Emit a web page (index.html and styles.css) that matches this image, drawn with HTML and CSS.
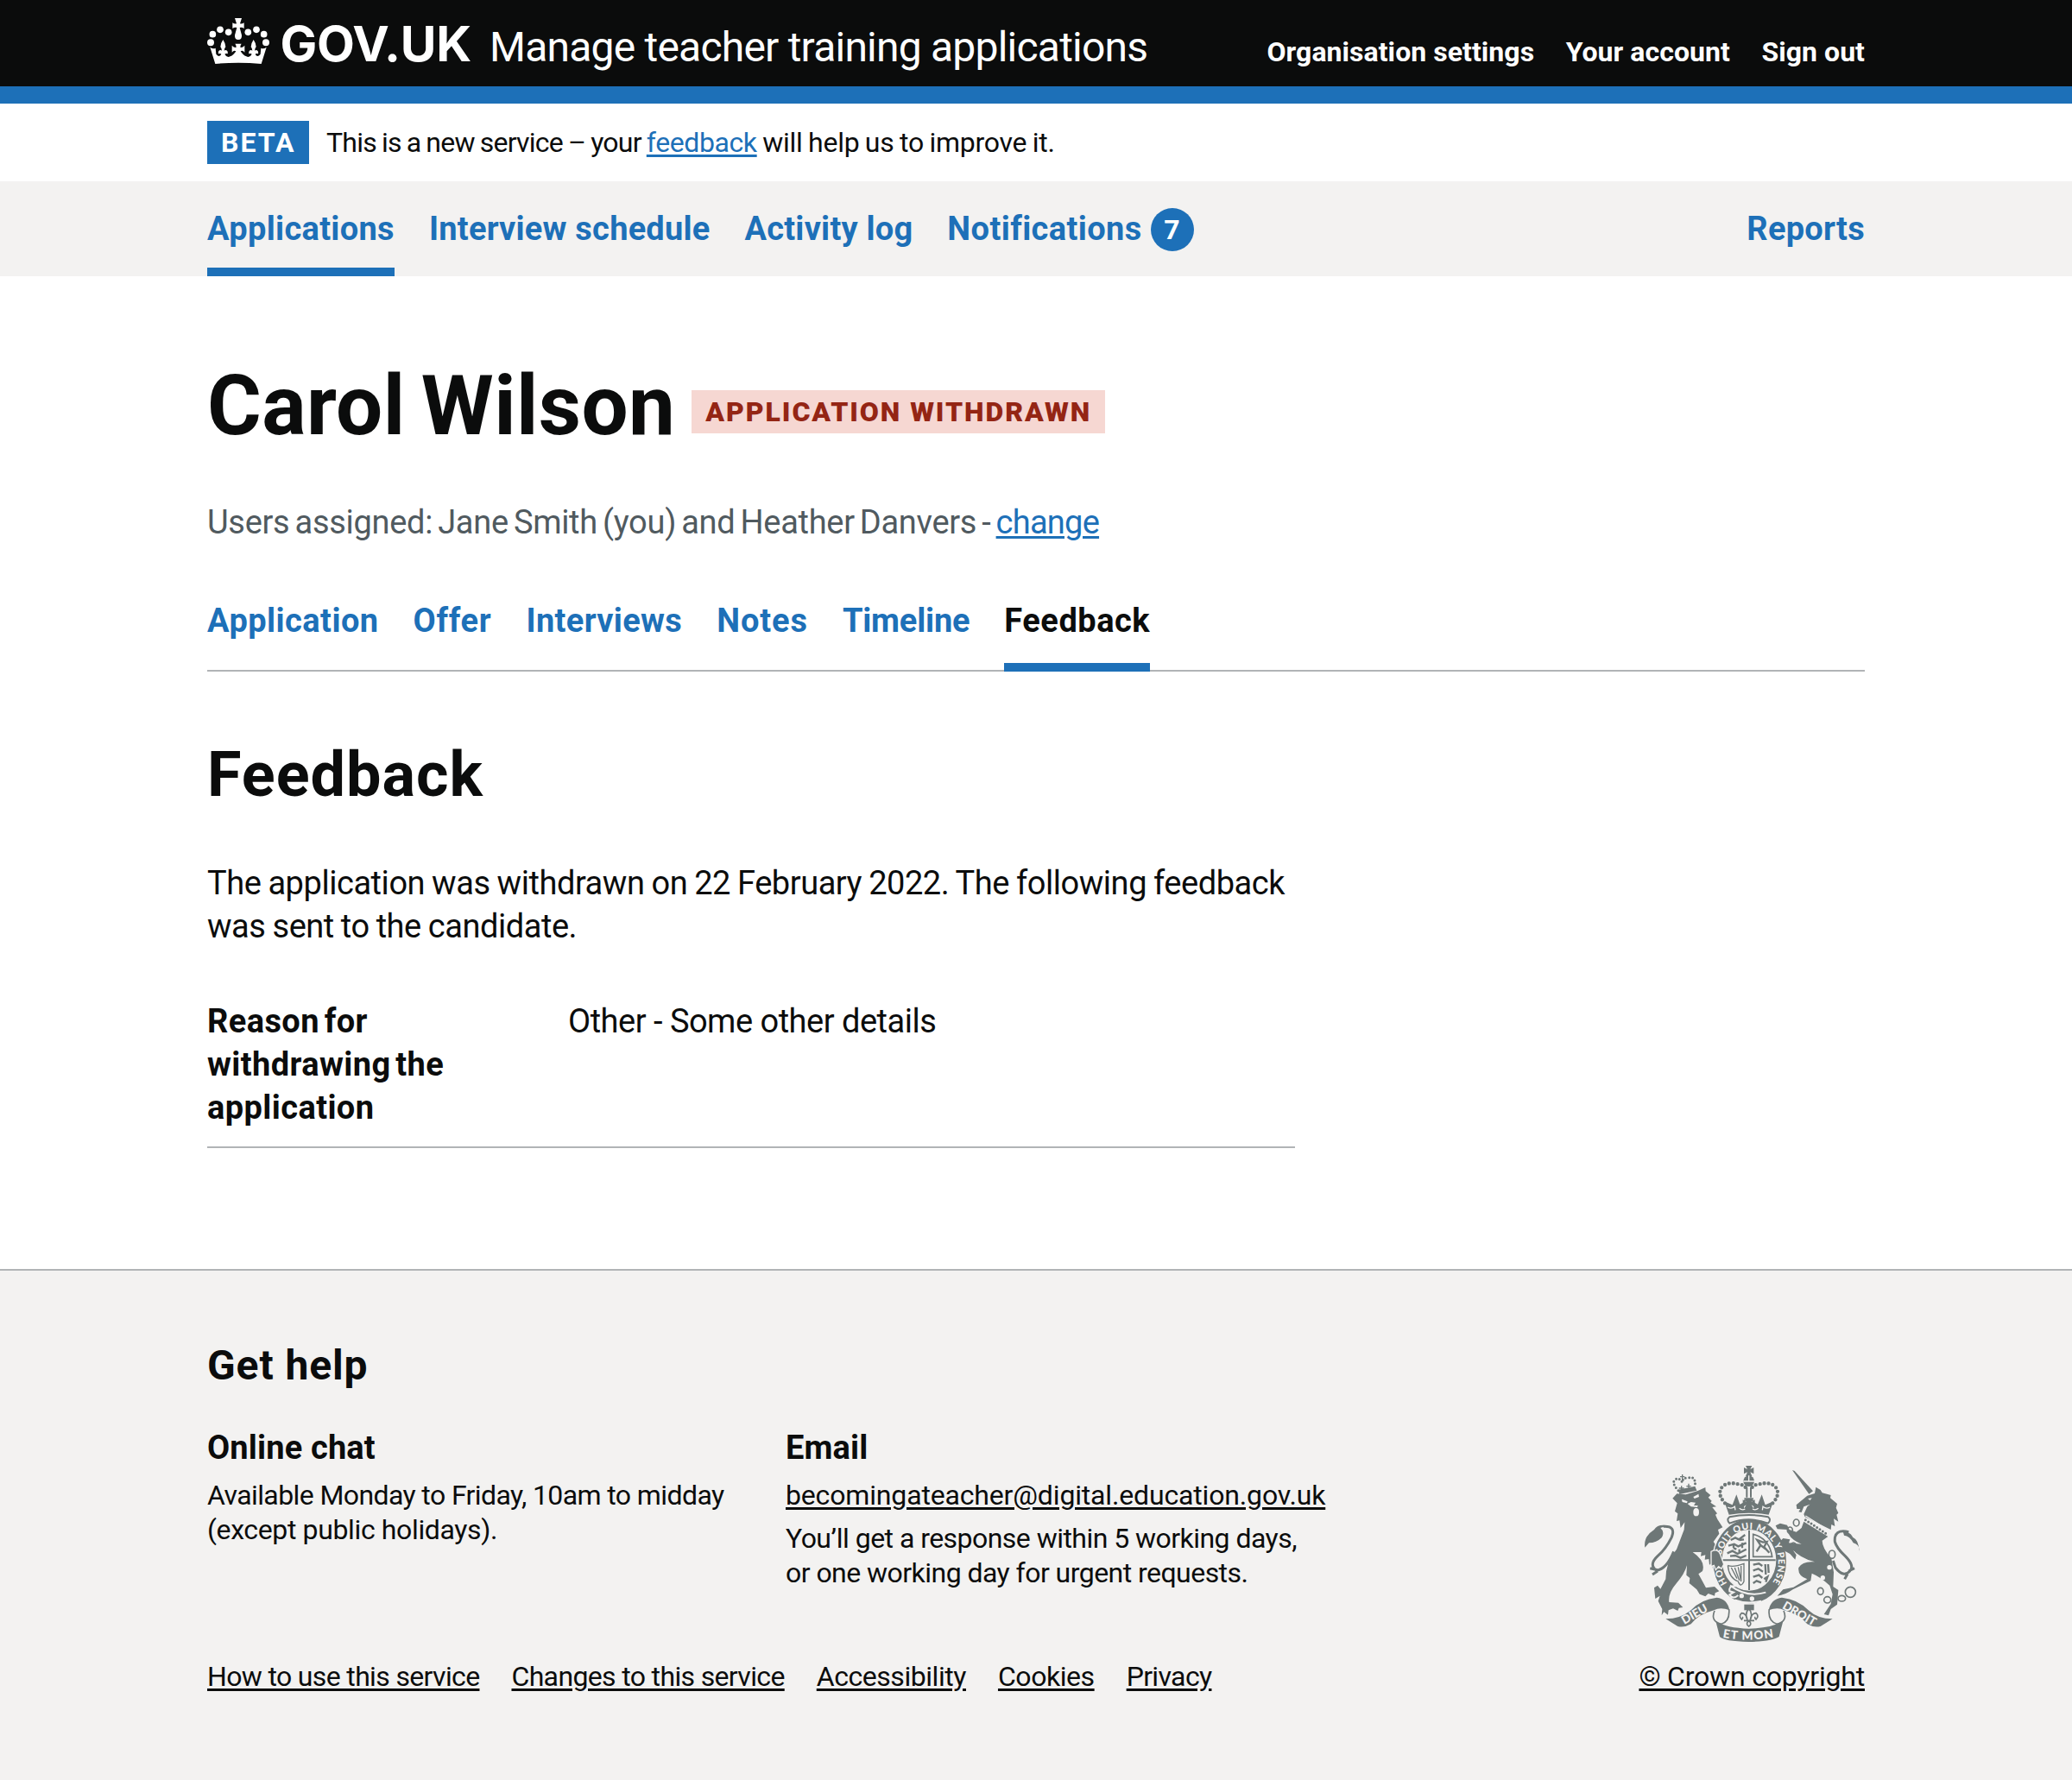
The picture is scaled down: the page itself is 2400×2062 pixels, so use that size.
FILE: index.html
```html
<!DOCTYPE html>
<html lang="en">
<head>
<meta charset="utf-8">
<title>Carol Wilson – Feedback – Manage teacher training applications</title>
<link rel="stylesheet" href="styles.css">
</head>
<body>
<header class="header">
  <div class="container header-row">
    <svg class="crown" viewBox="30 33 216 159" aria-hidden="true">
      <g fill="#fff">
        <circle cx="42" cy="118" r="12"/><circle cx="49" cy="89" r="11.5"/><circle cx="75" cy="73" r="11.5"/><circle cx="104" cy="82" r="11.5"/>
        <circle cx="172" cy="82" r="11.5"/><circle cx="201" cy="73" r="11.5"/><circle cx="227" cy="89" r="11.5"/><circle cx="234" cy="118" r="12"/>
        <path d="M126 33H150L144 52Q151 54 158 49V69Q151 64 143 66L150 92Q151 108 138 108Q125 108 126 92L133 66Q125 64 118 69V49Q125 54 132 52Z"/>
        <path d="M40 134L58 192Q138 184 218 192L236 134Q226 142 217 137L215 158Q204 172 197 158Q200 155 207 157Q209 148 203 145Q199 143 195 146Q196 137 200 133Q199 119 191 108Q183 119 182 133Q186 137 187 146Q183 143 179 145Q173 148 175 157Q182 155 185 158Q178 172 166 166Q154 162 146 148Q153 143 160 152V128Q152 137 145 134Q145 127 149 122H127Q131 127 131 134Q124 137 116 128V152Q123 143 130 148Q122 162 110 166Q98 172 91 158Q94 155 101 157Q103 148 97 145Q93 143 89 146Q90 137 94 133Q93 119 85 108Q77 119 76 133Q80 137 81 146Q77 143 73 145Q67 148 69 157Q76 155 79 158Q72 172 61 158L59 137Q50 142 40 134Z"/>
      </g>
    </svg>
    <a class="logotype">GOV.UK</a>
    <a class="service">Manage teacher training applications</a>
    <nav class="account">
      <a>Organisation settings</a><a>Your account</a><a>Sign out</a>
    </nav>
  </div>
</header>
<div class="container phase">
  <strong class="tag">BETA</strong>
  <p class="phase-text"><span class="phase-a">This is a new service – your </span><a class="link">feedback</a><span class="phase-b"> will help us to improve it.</span></p>
</div>
<nav class="primary">
  <div class="container primary-row">
    <a class="active">Applications</a><a class="sched">Interview schedule</a><a class="log">Activity log</a><a class="notif">Notifications<span class="badge">7</span></a><a class="reports">Reports</a>
  </div>
</nav>
<main class="container main">
  <h1 class="title">Carol Wilson <strong class="tag tag-red">APPLICATION WITHDRAWN</strong></h1>
  <p class="assigned">Users assigned: Jane Smith (you) and Heather Danvers - <a class="link">change</a></p>
  <nav class="tabs">
    <a class="t-app">Application</a><a class="t-offer">Offer</a><a class="t-int">Interviews</a><a class="t-notes">Notes</a><a class="t-time">Timeline</a><a class="t-feed current">Feedback</a>
  </nav>
  <h2 class="heading">Feedback</h2>
  <p class="body">The application was withdrawn on 22 February 2022. The following feedback<br>was sent to the candidate.</p>
  <dl class="summary">
    <dt>Reason for<br>withdrawing the<br>application</dt>
    <dd>Other - Some other details</dd>
  </dl>
</main>
<footer class="footer">
  <div class="container footer-row">
    <div>
      <h2 class="help">Get help</h2>
      <div class="help-cols">
        <section>
          <h3>Online chat</h3>
          <p class="chat">Available Monday to Friday, 10am to midday<br><span class="except">(except public holidays).</span></p>
        </section>
        <section>
          <h3>Email</h3>
          <p class="mail"><a>becomingateacher@digital.education.gov.uk</a></p>
          <p class="resp">You’ll get a response within 5 working days,<br>or one working day for urgent requests.</p>
        </section>
      </div>
      <nav class="links">
        <a class="l-how">How to use this service</a><a class="l-how">Changes to this service</a><a class="l-acc">Accessibility</a><a class="l-acc">Cookies</a><a class="l-how">Privacy</a>
      </nav>
    </div>
    <div class="copyright">
      <svg class="arms" viewBox="72 54 750 612" aria-hidden="true">
        <defs>
          <path id="garter" d="M362 462A100 115 0 1 1 512 469"/>
          <path id="mon" d="M346 650Q437 668 536 647"/>
        </defs>
        <!-- lion -->
        <g class="ink">
          <path d="M192 137L250 125L256 140L196 153Z"/>
          <path class="dots" d="M192 140Q166 112 182 102Q194 92 206 112Q206 94 228 96Q254 88 250 128"/>
          <path class="line" d="M206 84V108M198 92H214M203 124V140M194 132H212M228 116V134M220 125H236"/>
          <path d="M172 167L187 151L218 154L260 141L286 129L287 142L304 156L296 164L308 176L304 182L324 196L310 198L327 220L321 224L328 240L346 268L330 276L334 290L314 318L338 352L348 396L334 412L322 402L310 410L312 390L300 398L298 378L284 380L286 364L270 368L272 354L242 354Q288 386 276 420L262 430L288 478L318 474L334 490L320 496L318 506L296 498L286 508L266 500L256 484L230 462L232 444L220 434L222 400Q214 430 184 464Q156 496 160 528L192 530L208 546L194 548L190 558L174 550L158 556L156 572L142 562L134 574L136 552L122 524L128 506L112 516L108 478L120 470L130 482L148 448Q148 388 186 344L212 276L214 250L200 270L196 244L186 246L190 220L180 212L188 184Z"/>
          <path d="M76 338Q70 300 108 276Q120 256 154 262L130 270Q146 284 134 304Q116 322 90 322Z"/>
          <path class="tail" d="M140 265Q186 262 168 304Q148 344 120 368Q88 398 116 418Q152 412 176 352M120 416L94 410M120 420L102 432"/>
        </g>
        <g class="paper"><path d="M204 170L224 178L222 184L206 180ZM244 162L262 152L264 162L248 168ZM224 186L236 180L252 182L246 192H260L258 198L236 196Z"/><ellipse cx="254" cy="215" rx="10" ry="14"/></g>
        <!-- imperial crown -->
        <g class="ink">
          <path d="M426 54H448L442 66L454 60V82L442 76L448 90H426L432 76L420 82V60L432 66Z"/>
          <circle cx="437" cy="107" r="19"/>
          <path class="dots big" d="M354 184Q324 150 346 126Q366 108 400 118Q420 118 430 136M520 184Q550 150 528 126Q508 108 474 118Q454 118 444 136"/>
          <path d="M427 128H433V164H427ZM441 128H447V164H441Z"/>
          <path d="M352 178L380 190L394 154L406 188L428 176L420 170V200H454V170L446 176L468 188L482 154L494 190L522 178L506 224Q437 212 368 224Z"/>
          <path d="M420 166H454L446 180L458 172V198L446 190L454 204H420L428 190L416 198V172L428 180Z"/>
        </g>
        <path class="gap" d="M418 108H456M437 88V106M364 198Q376 206 388 196L390 208M510 198Q498 206 486 196L484 208M404 202Q414 210 424 204M470 202Q460 210 450 204"/>
        <!-- garter and shield -->
        <ellipse class="ink rim" cx="440" cy="386" rx="129" ry="148"/>
        <path class="collar" d="M370 232Q437 218 504 232Q516 242 504 254Q437 228 370 254Q358 242 370 232Z"/>
        <ellipse class="ring" cx="438" cy="382" rx="92" ry="104"/>
        <g class="ink">
          <path class="shieldline" d="M438 278V486M346 382H530"/>
          <path class="beasts" d="M374 312L390 304L402 310L424 294M366 332L386 326L400 334L428 322M362 358L380 350L398 360L428 344M404 312L420 310M384 340L394 344M372 368L390 366L408 374L428 366M384 326V340M414 322V340M404 344V360"/>
          <path class="thin" d="M452 292V370H518Q508 306 452 292Z"/>
          <path class="beasts" d="M464 352L478 330L466 312L486 320L500 318L490 336L508 356M478 330L496 344"/>
          <path class="beasts" d="M452 398L472 394L484 402M452 418L470 412L486 422M452 440L472 434L484 444M452 462L464 454L480 460M494 396L496 432M504 396L506 426M490 448L502 440L496 458"/>
          <path class="line" d="M364 400Q382 408 420 394V456Q408 480 400 456Q368 444 364 400M376 408L396 446M388 408L404 452M400 406L410 456M410 402V456"/>
        </g>
        <text class="motto"><textPath href="#garter" textLength="488">HONI SOIT QUI MAL Y PENSE</textPath></text>
        <path class="gap thick" d="M372 470Q430 514 496 494"/>
        <path class="gap thick" d="M388 520Q430 536 480 524"/>
        <g class="paper"><circle cx="412" cy="506" r="8"/><circle cx="448" cy="516" r="8"/></g>
        <path class="buckle" d="M394 472Q366 470 370 490L384 494L370 502Q382 520 400 504"/>
        <!-- lion's forepaw, laid over the garter -->
        <path class="ink paw" d="M306 352Q330 340 338 362L350 396L342 412L332 404L322 416L316 400L306 404Z"/>
        <!-- unicorn -->
        <g class="ink">
          <path d="M588 69L596 72L660 142L646 152Z"/>
          <path d="M602 190L640 158L666 150L670 128L686 138L692 148L722 156L720 166L744 186L740 200L748 218L742 224L748 248L732 238L736 264L724 258L722 276L632 232L628 222L640 196L650 188L628 196L620 216L610 214L616 204L604 204Z"/>
          <path d="M628 248L712 300L692 314Q692 340 724 376L732 424L730 474L748 486L744 536L722 552L714 574L698 570L722 534L728 500L718 470Q686 440 656 428L652 454L590 484Q562 504 536 506L556 484L592 476L640 448Q606 436 610 408Q624 384 666 388Q614 374 588 344L602 364L598 380L580 360L562 350L544 318L556 306L580 310L576 322L620 326Q572 306 572 276L536 274L530 262L546 254L570 260L578 276L602 284L620 270Z"/>
          <path d="M820 350Q824 330 800 322Q788 298 768 296L764 282Q790 284 798 302Q820 312 820 350Z"/>
          <path class="tail" d="M784 284Q732 272 736 318Q742 340 772 368Q806 402 788 420Q766 444 738 408L730 384M784 420L804 410M780 430L770 448"/>
          <path class="dots" d="M634 242L712 294"/>
        </g>
        <path class="gap" d="M634 228L720 282"/>
        <g class="chain"><ellipse cx="602" cy="252" rx="10" ry="12"/><ellipse cx="580" cy="278" rx="9" ry="11"/><ellipse cx="592" cy="334" rx="10" ry="13"/><ellipse cx="726" cy="362" rx="11" ry="14"/><ellipse cx="686" cy="490" rx="10" ry="12"/><ellipse cx="710" cy="520" rx="12" ry="11"/><ellipse cx="760" cy="515" rx="13" ry="10"/><circle cx="790" cy="493" r="18"/></g>
        <g class="paper"><circle cx="717" cy="407" r="8"/><circle cx="694" cy="443" r="8"/><path d="M642 168L656 166L650 174Z"/></g>
        <!-- motto scroll -->
        <g class="ink">
          <path d="M148 586Q200 586 236 556Q270 518 326 512Q362 516 370 556Q338 544 316 556Q262 570 236 604Q212 618 190 612Z"/>
          <path d="M728 586Q676 586 644 556Q608 518 552 512Q514 516 506 556Q538 544 560 556Q612 570 640 604Q664 618 686 612Z"/>
          <path class="thin" d="M318 558Q302 594 342 604Q372 594 368 552M558 558Q574 594 534 604Q502 592 508 552"/>
          <path d="M322 594Q360 618 437 620Q516 618 556 594L542 648Q520 664 437 666Q350 664 336 648Z"/>
          <path d="M421 536H455V556H421Z"/>
          <path class="thin" d="M437 550Q422 566 432 590Q428 566 412 566Q400 576 412 588Q418 582 414 580M437 550Q452 566 442 590Q446 566 462 566Q474 576 462 588Q456 582 460 580M420 592H456M437 592Q424 604 437 612Q450 604 437 592"/>
        </g>
        <text class="word" transform="translate(213 606) rotate(-30)">DIEU</text>
        <text class="word" transform="translate(551 548) rotate(30)">DROIT</text>
        <text class="word"><textPath href="#mon" textLength="178">ET MON</textPath></text>
      </svg>
      <a>© Crown copyright</a>
    </div>
  </div>
</footer>
</body>
</html>
```
FILE: styles.css
```css
* { box-sizing: border-box; }
body, h1, h2, h3, p, dl, dd { margin: 0; }
body { font-family: Roboto, "Liberation Sans", sans-serif; color: #0b0c0c; background: #fff; }
.container { width: 1920px; margin: 0 auto; }
.link { color: #1d70b8; }
.link, .footer a { text-decoration: underline; text-decoration-thickness: 3px; text-underline-offset: 3px; }

.header { height: 120px; background: #0b0c0c; border-bottom: 20px solid #1d70b8; color: #fff; }
.header-row { display: flex; align-items: baseline; padding-top: 1px; }
.crown { width: 72px; height: 53px; align-self: flex-start; margin-top: 20px; }
.logotype { font: 700 57px/100px Inter, sans-serif; letter-spacing: -.3px; margin-left: 12.5px; width: 242.5px; }
.service { font-size: 48px; letter-spacing: -.78px; }
.account { display: flex; gap: 36.5px; margin-left: auto; font-size: 32px; font-weight: 700; letter-spacing: .05px; }

.phase { display: flex; gap: 20px; height: 90px; padding-top: 20px; }
.tag { height: 50px; padding: 1px 16px 0; background: #1d70b8; color: #fff; font-size: 32px; line-height: 49px; letter-spacing: 2px; }
.phase .tag { width: 118px; white-space: nowrap; }
.phase-text { font-size: 32px; line-height: 50px; letter-spacing: -.4px; white-space: pre; }
.phase-a { letter-spacing: -.76px; word-spacing: -1.2px; }
.phase-b { letter-spacing: -.25px; word-spacing: -1.2px; }

.primary { background: #f3f2f1; height: 110px; }
.primary-row { display: flex; gap: 40px; }
.primary a { display: flex; height: 110px; padding-top: 30px; font-size: 38px; line-height: 50px; font-weight: 700; color: #1d70b8; letter-spacing: .32px; }
.primary .active { border-bottom: 10px solid #1d70b8; }
.primary .sched, .primary .log { letter-spacing: .22px; }
.primary .notif { letter-spacing: .4px; }
.primary .reports { margin-left: auto; letter-spacing: .25px; }
.badge { width: 50px; height: 50px; margin: 1px 0 0 10px; border-radius: 50%; background: #1d70b8; color: #fff; font-size: 32px; text-align: center; }

.main { padding: 100px 0 140px; }
.title { display: flex; gap: 19px; font-size: 96px; line-height: 100px; letter-spacing: .4px; word-spacing: -6px; }
.tag-red { margin-top: 32px; background: #f6d7d2; color: #942514; letter-spacing: 1.92px; word-spacing: 0; }
.assigned { margin-top: 60px; font-size: 38px; line-height: 50px; color: #505a5f; letter-spacing: -.3px; word-spacing: -3px; }
.assigned .link { letter-spacing: -.75px; }
.tabs { display: flex; gap: 40px; height: 84px; margin-top: 64px; box-shadow: inset 0 -2px #b1b4b6; font-size: 38px; line-height: 50px; font-weight: 700; color: #1d70b8; }
.t-app { letter-spacing: .45px; }
.t-offer { letter-spacing: .7px; }
.t-int { letter-spacing: .35px; }
.t-notes { letter-spacing: .9px; }
.t-time { letter-spacing: -.2px; }
.t-feed { letter-spacing: .52px; }
.current { color: #0b0c0c; border-bottom: 10px solid #1d70b8; }
.heading { margin-top: 80px; font-size: 72px; line-height: 80px; letter-spacing: 1px; }
.body { margin-top: 60px; font-size: 38px; line-height: 50px; letter-spacing: -.45px; word-spacing: -1px; }
.summary { display: grid; grid-template-columns: 418px 1fr; width: 1260px; margin-top: 60px; padding-bottom: 20px; border-bottom: 2px solid #b1b4b6; font-size: 38px; line-height: 50px; }
.summary dt { font-weight: 700; letter-spacing: .4px; word-spacing: -4px; }
.summary dd { letter-spacing: -.5px; }

.footer { height: 592px; background: #f3f2f1; border-top: 2px solid #b1b4b6; padding-top: 80px; font-size: 32px; line-height: 40px; }
.footer-row { display: flex; justify-content: space-between; align-items: flex-end; }
.help { font-size: 48px; line-height: 60px; letter-spacing: .9px; }
.help-cols { display: grid; grid-template-columns: 670px 670px; margin-top: 40px; }
.footer h3 { font-size: 38px; line-height: 50px; letter-spacing: .15px; }
.footer p { margin-top: 10px; }
.chat { letter-spacing: -.6px; }
.except { letter-spacing: -.37px; }
.mail { letter-spacing: -.16px; }
.resp { letter-spacing: -.54px; }
.links { display: flex; gap: 37px; margin-top: 80px; }
.l-how { letter-spacing: -.65px; }
.l-acc { letter-spacing: -.45px; }
.copyright { display: flex; flex-direction: column; align-items: flex-end; gap: 20px; letter-spacing: -.2px; }
.arms { width: 250px; height: 204px; margin-right: 6px; }

.ink { fill: #6e7777; }
.ink path.dots, .ink path.line, .ink path.tail, .ink path.thin, .ink path.beasts, .ink path.shieldline { fill: none; stroke: #6e7777; }
.ink path.dots { stroke-width: 9px; stroke-linecap: round; stroke-dasharray: 0 12; }
.ink path.dots.big { stroke-width: 13px; stroke-dasharray: 0 15; }
.ink path.line { stroke-width: 4px; }
.ink path.thin { stroke-width: 5px; }
.ink path.tail { stroke-width: 9px; }
.ink path.beasts { stroke-width: 7px; }
.ink path.shieldline { stroke-width: 6px; }
.rim, .paw { stroke: #f3f2f1; stroke-width: 4px; }
.paper { fill: #f3f2f1; }
.gap { fill: none; stroke: #f3f2f1; stroke-width: 4px; }
.gap.thick { stroke-width: 6px; }
.collar { fill: #f3f2f1; stroke: #6e7777; stroke-width: 6px; stroke-linejoin: round; }
.ring { fill: #f3f2f1; stroke: #f3f2f1; stroke-width: 4px; }
.buckle { fill: none; stroke: #f3f2f1; stroke-width: 6px; }
.chain { fill: none; stroke: #6e7777; stroke-width: 5px; }
.motto { font: 900 32px Lato, sans-serif; fill: #f3f2f1; }
.word { font: 900 41px Lato, sans-serif; fill: #f3f2f1; }
```
